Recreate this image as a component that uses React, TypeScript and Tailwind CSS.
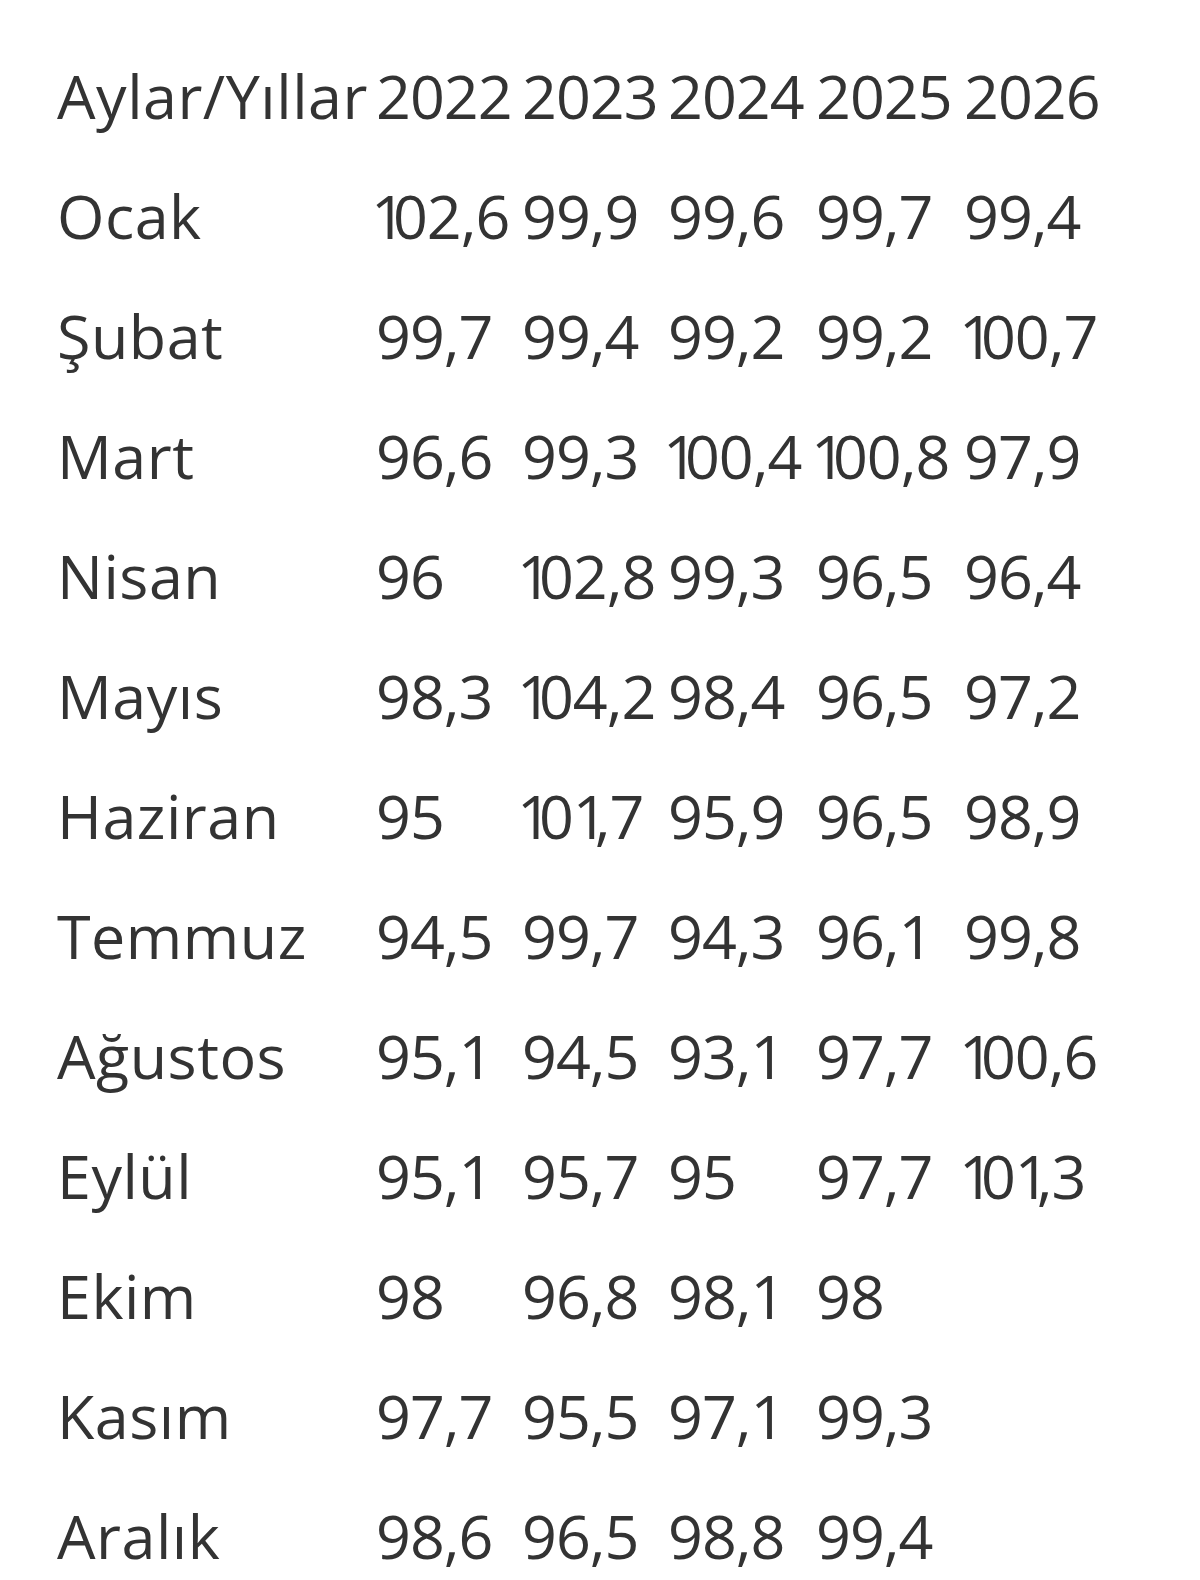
const years = ["2022", "2023", "2024", "2025", "2026"];

const rows: [string, string[]][] = [
  ["Ocak", ["102,6", "99,9", "99,6", "99,7", "99,4"]],
  ["Şubat", ["99,7", "99,4", "99,2", "99,2", "100,7"]],
  ["Mart", ["96,6", "99,3", "100,4", "100,8", "97,9"]],
  ["Nisan", ["96", "102,8", "99,3", "96,5", "96,4"]],
  ["Mayıs", ["98,3", "104,2", "98,4", "96,5", "97,2"]],
  ["Haziran", ["95", "101,7", "95,9", "96,5", "98,9"]],
  ["Temmuz", ["94,5", "99,7", "94,3", "96,1", "99,8"]],
  ["Ağustos", ["95,1", "94,5", "93,1", "97,7", "100,6"]],
  ["Eylül", ["95,1", "95,7", "95", "97,7", "101,3"]],
  ["Ekim", ["98", "96,8", "98,1", "98", ""]],
  ["Kasım", ["97,7", "95,5", "97,1", "99,3", ""]],
  ["Aralık", ["98,6", "96,5", "98,8", "99,4", ""]],
];

// the "1" in the original font is narrow, so tighten the space after it
function Num({ value }: { value: string }) {
  const parts = value.split(/(1)/).filter((p) => p !== "");
  return (
    <>
      {parts.map((p, i) =>
        p === "1" ? (
          <span key={i} className="tracking-[-13px]">
            1
          </span>
        ) : (
          <span key={i}>{p}</span>
        )
      )}
    </>
  );
}

export default function App() {
  return (
    <div className="min-h-screen bg-white pl-[57px] pt-[36px] text-[#333333] font-['Open_Sans',sans-serif]">
      <div className="grid grid-cols-[319px_146px_146px_148px_148px_auto] text-[61px] leading-[120px] tracking-[-1px]">
        <div className="whitespace-nowrap tracking-[0.5px]">Aylar/Yıllar</div>
        {years.map((y) => (
          <div key={y} className="whitespace-nowrap">
            {y}
          </div>
        ))}
        {rows.map(([month, vals]) => (
          <div key={month} className="contents">
            <div className="whitespace-nowrap tracking-[0.5px]">{month}</div>
            {vals.map((v, i) => (
              <div
                key={i}
                className={v.startsWith("1") ? "whitespace-nowrap -ml-[5px]" : "whitespace-nowrap"}
              >
                <Num value={v} />
              </div>
            ))}
          </div>
        ))}
      </div>
    </div>
  );
}
